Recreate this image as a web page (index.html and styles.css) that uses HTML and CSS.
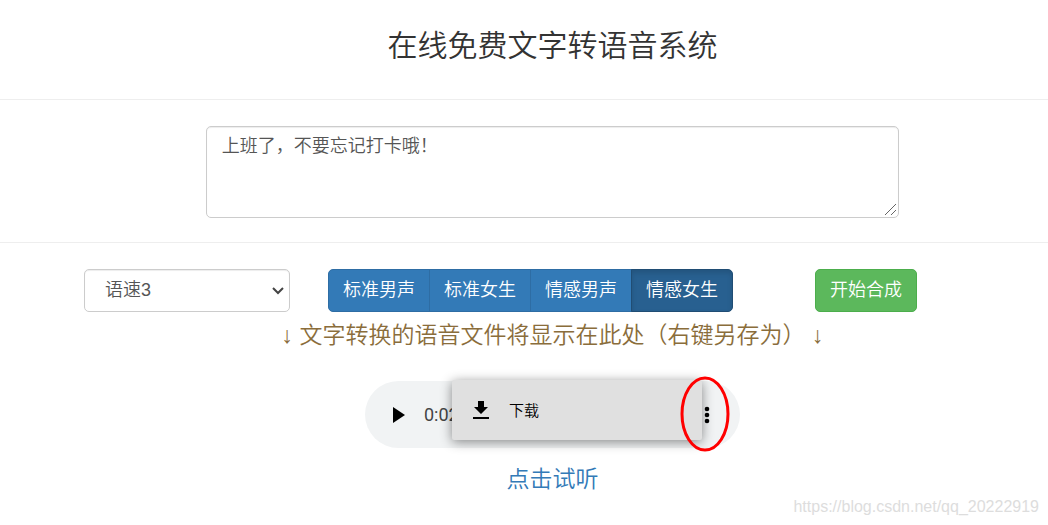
FILE: index.html
```html
<!DOCTYPE html>
<html lang="zh-CN">
<head>
    <meta charset="UTF-8">
    <meta name="viewport" content="width=device-width, initial-scale=1.0">
    <title>在线免费文字转语音系统</title>
    <link rel="stylesheet" href="styles.css">
</head>
<body>
    <header class="section">
        <h1 class="title">在线免费文字转语音系统</h1>
    </header>
    <hr>
    <div class="section">
        <textarea class="form-control text-input" aria-label="文字内容" spellcheck="false">上班了，不要忘记打卡哦！</textarea>
    </div>
    <hr>
    <main class="section">
        <div class="controls">
            <div class="select-wrap">
                <select class="form-control speed" aria-label="语速">
                    <option>语速1</option>
                    <option>语速2</option>
                    <option selected>语速3</option>
                    <option>语速4</option>
                    <option>语速5</option>
                </select>
                <svg class="chevron" viewBox="0 0 12 8" aria-hidden="true"><path d="M1 1l5 5 5-5" fill="none" stroke="#444" stroke-width="2"/></svg>
            </div>
            <div class="btn-group">
                <button type="button" class="btn btn-primary">标准男声</button>
                <button type="button" class="btn btn-primary">标准女生</button>
                <button type="button" class="btn btn-primary">情感男声</button>
                <button type="button" class="btn btn-primary active">情感女生</button>
            </div>
            <button type="button" class="btn btn-success">开始合成</button>
        </div>

        <p class="tip">↓ 文字转换的语音文件将显示在此处（右键另存为） ↓</p>

        <div class="player">
            <button type="button" class="icon-btn" aria-label="播放">
                <svg width="12" height="16" viewBox="0 0 12 16"><path d="M0 0l12 8-12 8z"/></svg>
            </button>
            <span class="time">0:02</span>
            <button type="button" class="icon-btn more" aria-label="更多选项">
                <svg width="6" height="18" viewBox="0 0 6 18"><circle cx="3" cy="3" r="2.3"/><circle cx="3" cy="9" r="2.3"/><circle cx="3" cy="15" r="2.3"/></svg>
            </button>
            <div class="menu">
                <button type="button" class="menu-item">
                    <svg width="16" height="18" viewBox="0 0 16 18"><path d="M5 0h6v6h4l-7 7-7-7h4zM0 16h16v2H0z"/></svg>
                    下载
                </button>
            </div>
            <svg class="marker" viewBox="0 0 50 76" aria-hidden="true"><ellipse cx="25" cy="38" rx="23" ry="36" fill="none" stroke="#f00" stroke-width="3"/></svg>
        </div>

        <a class="listen" href="#">点击试听</a>
    </main>
    <div class="watermark">https://blog.csdn.net/qq_20222919</div>
</body>
</html>
```
FILE: styles.css
```css
* {
    box-sizing: border-box;
}

body {
    margin: 0;
    position: relative;
    min-height: 100vh;
    background: #fff;
    color: #333;
    font-family: "Liberation Sans", "Noto Sans CJK SC", sans-serif;
    font-size: 18px;
    font-weight: 350;
    line-height: 25px;
}

button,
select,
textarea {
    font: inherit;
}

.section {
    padding-left: 57px;
    text-align: center;
}

.title {
    margin: 0;
    padding: 29px 0 27px;
    font-size: 30px;
    font-weight: 350;
    line-height: 34px;
}

hr {
    margin: 9px 0 26px;
    border: 0;
    border-top: 1px solid #eee;
}

.form-control {
    border: 1px solid #ccc;
    border-radius: 5px;
    background: #fff;
    color: #555;
    box-shadow: inset 0 1px 1px rgba(0, 0, 0, 0.075);
}

.text-input {
    display: block;
    width: 70%;
    height: 92px;
    margin: 0 auto 24px;
    padding: 7px 15px;
    resize: both;
}

.text-input::-webkit-resizer {
    background: linear-gradient(135deg, transparent 48%, #666 48%, #666 53%, transparent 53%, transparent 73%, #666 73%, #666 78%, transparent 78%) 2px 2px / 11px 11px no-repeat;
}

.controls {
    display: flex;
    padding-left: 27px;
}

.select-wrap {
    position: relative;
    width: 206px;
    margin-right: 38px;
}

.speed {
    width: 100%;
    height: 43px;
    padding: 0 20px;
    appearance: none;
}

.chevron {
    position: absolute;
    top: 18px;
    right: 6px;
    width: 12px;
    height: 8px;
    pointer-events: none;
}

.btn {
    height: 43px;
    padding: 0 14px;
    border: 1px solid transparent;
    border-radius: 5px;
    color: #fff;
    white-space: nowrap;
    cursor: pointer;
}

.btn-group {
    display: flex;
    margin-right: 82px;
}

.btn-group .btn + .btn {
    margin-left: -1px;
    border-top-left-radius: 0;
    border-bottom-left-radius: 0;
}

.btn-group .btn:not(:last-child) {
    border-top-right-radius: 0;
    border-bottom-right-radius: 0;
}

.btn-primary {
    background: #337ab7;
    border-color: #2e6da4;
}

.btn-primary.active {
    background: #286090;
    border-color: #204d74;
    box-shadow: inset 0 3px 5px rgba(0, 0, 0, 0.125);
}

.btn-success {
    background: #5cb85c;
    border-color: #4cae4c;
}

.tip {
    margin: 8px 0 30px;
    color: #8a6d3b;
    font-size: 23px;
    line-height: 31px;
}

.player {
    position: relative;
    display: flex;
    align-items: center;
    width: 375px;
    height: 67px;
    margin: 0 auto 15px;
    padding: 0 30px 0 28px;
    border-radius: 34px;
    background: #f1f3f4;
}

.icon-btn {
    display: flex;
    padding: 0;
    border: 0;
    background: none;
    cursor: pointer;
}

.time {
    margin-left: 19px;
    color: #444;
    font-family: Roboto, sans-serif;
    font-weight: 400;
}

.more {
    margin-left: auto;
}

.menu {
    position: absolute;
    top: -1px;
    left: 87px;
    width: 250px;
    background: #e0e0e0;
    border-radius: 2px;
    box-shadow: 0 2px 12px rgba(0, 0, 0, 0.45);
}

.menu-item {
    display: flex;
    align-items: center;
    gap: 20px;
    width: 100%;
    height: 60px;
    padding: 0 21px;
    border: 0;
    background: none;
    color: #000;
    font-size: 15px;
    cursor: pointer;
}

.marker {
    position: absolute;
    top: -5px;
    left: 315px;
    width: 50px;
    height: 76px;
}

.listen {
    color: #337ab7;
    font-size: 23px;
    line-height: 32px;
    text-decoration: none;
}

.watermark {
    position: absolute;
    right: 9px;
    bottom: 6px;
    color: #ddd;
    font-size: 16px;
}
```
